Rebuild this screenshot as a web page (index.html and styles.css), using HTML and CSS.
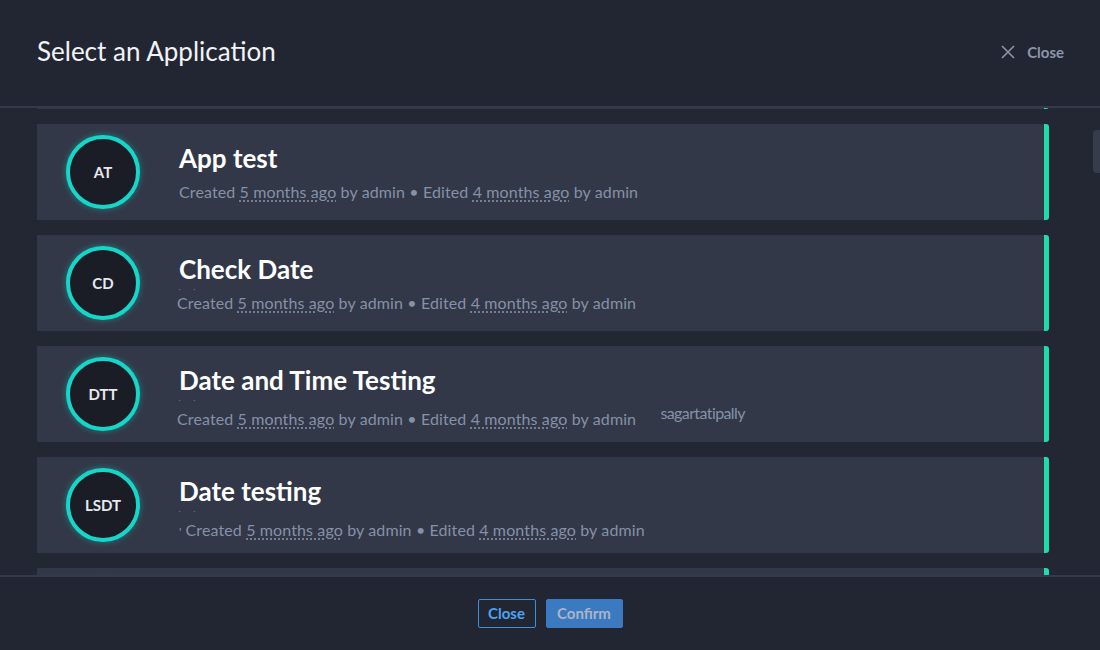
FILE: index.html
```html
<!DOCTYPE html>
<html>
<head>
<meta charset="utf-8">
<link rel="stylesheet" href="styles.css">
</head>
<body>
<div class="modal">
  <header class="head">
    <h1 class="head-title">Select an Application</h1>
    <button class="head-close">
      <svg class="x-icon" width="14" height="14" viewBox="0 0 14 14"><path d="M1 1 L13 13 M13 1 L1 13" stroke="currentColor" stroke-width="1.6" fill="none"/></svg>
      <span>Close</span>
    </button>
  </header>
  <div class="viewport">
    <div class="list">
      <div class="card">
        <div class="avatar"></div>
      </div>
      <div class="card">
        <div class="avatar">AT</div>
        <div class="info">
          <div class="title">App test</div>
          <div class="meta">Created <span class="ago">5 months ago</span> by admin • Edited <span class="ago">4 months ago</span> by admin</div>
        </div>
      </div>
      <div class="card">
        <div class="avatar">CD</div>
        <div class="info">
          <div class="title">Check Date</div>
          <div class="ghost">▪ ▪</div>
          <div class="meta meta-left">Created <span class="ago">5 months ago</span> by admin • Edited <span class="ago">4 months ago</span> by admin</div>
        </div>
      </div>
      <div class="card">
        <div class="avatar">DTT</div>
        <div class="info">
          <div class="title">Date and Time Testing</div>
          <div class="ghost">▪ ▪</div>
          <div class="meta meta-left meta-low">Created <span class="ago">5 months ago</span> by admin • Edited <span class="ago">4 months ago</span> by admin <span class="owner">sagartatipally</span></div>
        </div>
      </div>
      <div class="card">
        <div class="avatar">LSDT</div>
        <div class="info">
          <div class="title">Date testing</div>
          <div class="ghost">▪ ▪</div>
          <div class="meta meta-low"><span class="tick">'</span>Created <span class="ago">5 months ago</span> by admin • Edited <span class="ago">4 months ago</span> by admin</div>
        </div>
      </div>
      <div class="card">
        <div class="avatar"></div>
      </div>
    </div>
    <div class="thumb"></div>
  </div>
  <footer class="foot">
    <button class="btn btn-outline">Close</button>
    <button class="btn btn-primary">Confirm</button>
  </footer>
</div>
</body>
</html>
```

FILE: styles.css
```css
* { box-sizing: border-box; }
html, body {
  margin: 0;
  padding: 0;
  width: 1100px;
  height: 650px;
  overflow: hidden;
  background: #222632;
  font-family: "Lato", "Noto Sans", sans-serif;
}
.modal {
  display: flex;
  flex-direction: column;
  width: 1100px;
  height: 650px;
  background: #222632;
}
.head {
  height: 108px;
  flex: none;
  display: flex;
  align-items: center;
  justify-content: space-between;
  padding: 0 36px 4px 37px;
  border-bottom: 2px solid #353a4a;
  background: #222632;
  position: relative;
  z-index: 2;
}
.head-title {
  margin: 0;
  font-size: 26px;
  font-weight: 400;
  color: #f1f3f6;
}
.head-close {
  display: flex;
  align-items: center;
  gap: 12px;
  background: none;
  border: none;
  padding: 0;
  margin-top: 2px;
  color: #8c96aa;
  font-family: inherit;
  font-size: 15px;
  font-weight: 700;
}
.viewport {
  flex: 1;
  position: relative;
  overflow: hidden;
  background: #232733;
}
.list {
  margin-top: -95px;
  display: flex;
  flex-direction: column;
  gap: 15px;
  padding-left: 37px;
  width: 1049px;
}
.card {
  height: 96px;
  flex: none;
  display: flex;
  align-items: center;
  background: #323848;
  border-right: 5px solid #1fdcad;
  border-radius: 1px 3px 3px 1px;
  padding-left: 29px;
}
.avatar {
  width: 74px;
  height: 74px;
  flex: none;
  border-radius: 50%;
  border: 4px solid #16d6c8;
  background: #1b1d26;
  box-shadow: 0 0 6px rgba(22, 214, 200, 0.45);
  display: flex;
  align-items: center;
  justify-content: center;
  color: #e6e9ee;
  font-size: 15px;
  font-weight: 700;
}
.info {
  align-self: flex-start;
  padding-top: 18px;
  margin-left: 39px;
  display: flex;
  flex-direction: column;
  position: relative;
}
.title {
  font-size: 26px;
  font-weight: 700;
  color: #ffffff;
  line-height: 32px;
}
.ghost {
  position: absolute;
  left: 0;
  top: 52px;
  font-size: 4px;
  letter-spacing: 6px;
  color: #6c7588;
}
.meta {
  font-size: 16px;
  letter-spacing: 0.12px;
  color: #8591a7;
  line-height: 20px;
  margin-top: 8px;
  white-space: nowrap;
}
.meta-left { margin-left: -2px; }
.meta-low { margin-top: 13px; }
.ago {
  text-decoration: underline dotted;
  text-underline-offset: 3px;
}
.owner {
  margin-left: 20px;
  position: relative;
  top: -6px;
  letter-spacing: -0.6px;
}
.tick {
  font-size: 12px;
  margin-right: 4px;
  color: #8591a7;
}
.thumb {
  position: absolute;
  right: 0;
  top: 22px;
  width: 7px;
  height: 43px;
  border-radius: 4px 0 0 4px;
  background: #373c4c;
}
.foot {
  height: 75px;
  flex: none;
  border-top: 2px solid #353a4a;
  background: #222632;
  display: flex;
  align-items: center;
  justify-content: center;
  gap: 10px;
  padding-bottom: 1px;
}
.btn {
  height: 29px;
  border-radius: 2px;
  font-family: inherit;
  font-size: 15px;
  font-weight: 700;
  padding: 0 6px;
}
.btn-outline {
  width: 58px;
  background: transparent;
  border: 1px solid #3c8ee0;
  color: #4aa5f5;
}
.btn-primary {
  width: 77px;
  background: #3b79c0;
  border: 1px solid #3b79c0;
  color: #a9b6c6;
}
```
